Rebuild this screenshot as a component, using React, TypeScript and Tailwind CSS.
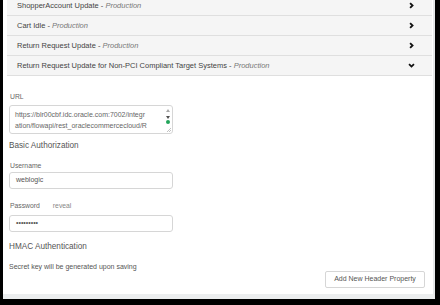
import React from "react";

const rows = [
  { name: "ShopperAccount Update", open: false },
  { name: "Cart Idle", open: false },
  { name: "Return Request Update", open: false },
  { name: "Return Request Update for Non-PCI Compliant Target Systems", open: true },
];

function Chevron({ open }: { open: boolean }) {
  return (
    <svg width="7" height="7" viewBox="0 0 10 10" className="text-[#111]">
      {open ? (
        <path d="M1.5 3 L5 6.5 L8.5 3" fill="none" stroke="currentColor" strokeWidth="2.6" />
      ) : (
        <path d="M3 1.5 L6.5 5 L3 8.5" fill="none" stroke="currentColor" strokeWidth="2.6" />
      )}
    </svg>
  );
}

export default function App() {
  return (
    <div className="w-[440px] h-[305px] bg-black overflow-hidden" style={{ fontFamily: '"Liberation Sans", Arial, sans-serif' }}>
      <div className="ml-[3px] w-[432px] h-[299px] bg-white border-r-2 border-[#e6e8e9] border-b-[5px] border-b-[#eceeef] overflow-hidden flex flex-col">
        <div className="ml-[4px] mr-[1px] mt-[-4px]">
          {rows.map((r) => (
            <div
              key={r.name}
              className="h-[20px] flex items-center justify-between bg-[#f5f5f5] border-b border-[#dfdfdf] pl-[10px] pr-[17px] text-[7.5px] text-[#444]"
            >
              <span>
                {r.name} - <span className="italic text-[#777]">Production</span>
              </span>
              <Chevron open={r.open} />
            </div>
          ))}
        </div>

        <div className="pl-[6px] pt-[16px] flex flex-col text-[#555]">
          <div className="text-[6.8px] text-[#666] h-[10px] leading-[10px] ml-[1px]">URL</div>
          <div className="mt-[3px] w-[164px] h-[29px] border border-[#d6d6d6] rounded-[3px] flex overflow-hidden">
            <div className="flex-1 pl-[5px] pt-[3px] text-[7px] leading-[11px] text-[#666] overflow-hidden">
              <div className="whitespace-nowrap">https://blr00cbf.idc.oracle.com:7002/integr</div>
              <div className="whitespace-nowrap">ation/flowapi/rest_oraclecommercecloud/R</div>
              <div className="whitespace-nowrap">EST_V1/WEBHOOK</div>
            </div>
            <div className="w-[8px] flex flex-col items-center pt-[3px] relative">
              <svg width="4" height="3" viewBox="0 0 4 3"><path d="M0 3 L2 0 L4 3Z" fill="#a8a8a8" /></svg>
              <svg width="4" height="3" viewBox="0 0 4 3" className="mt-[4px]"><path d="M0 0 L2 3 L4 0Z" fill="#505050" /></svg>
              <div className="w-[4px] h-[4px] rounded-full bg-[#22a55a] mt-[1px]" />
              <svg width="4" height="4" viewBox="0 0 4 4" className="absolute bottom-[1px] right-[1px]">
                <path d="M4 0 L0 4 M4 2 L2 4" stroke="#9a9a9a" strokeWidth="0.6" />
              </svg>
            </div>
          </div>

          <div className="mt-[6px] text-[8.2px] h-[12px] leading-[12px] text-[#555]">Basic Authorization</div>

          <div className="mt-[9px] text-[6.8px] text-[#666] h-[10px] leading-[10px] ml-[1px]">Username</div>
          <div className="mt-[1px] w-[164px] h-[17px] border border-[#d6d6d6] rounded-[3px] flex items-center pl-[6px] text-[7px] text-[#555]">
            weblogic
          </div>

          <div className="mt-[12px] flex items-center gap-[13px] text-[6.8px] text-[#666] h-[10px] leading-[10px] ml-[1px]">
            <span>Password</span>
            <span className="text-[#888]">reveal</span>
          </div>
          <div className="mt-[4px] w-[164px] h-[17px] border border-[#d6d6d6] rounded-[3px] flex items-center pl-[6px] text-[7px] text-[#555]">
            •••••••••
          </div>

          <div className="mt-[9px] text-[8.2px] h-[12px] leading-[12px] text-[#555]">HMAC Authentication</div>
          <div className="mt-[9px] text-[7px] h-[10px] leading-[10px] text-[#555]">Secret key will be generated upon saving</div>

          <div className="flex justify-end pr-[8px] mt-[-1px]">
            <div className="w-[100px] h-[17px] border border-[#d6d6d6] rounded-[2px] flex items-center justify-center text-[7px] text-[#555]">
              Add New Header Property
            </div>
          </div>
        </div>
      </div>
    </div>
  );
}
